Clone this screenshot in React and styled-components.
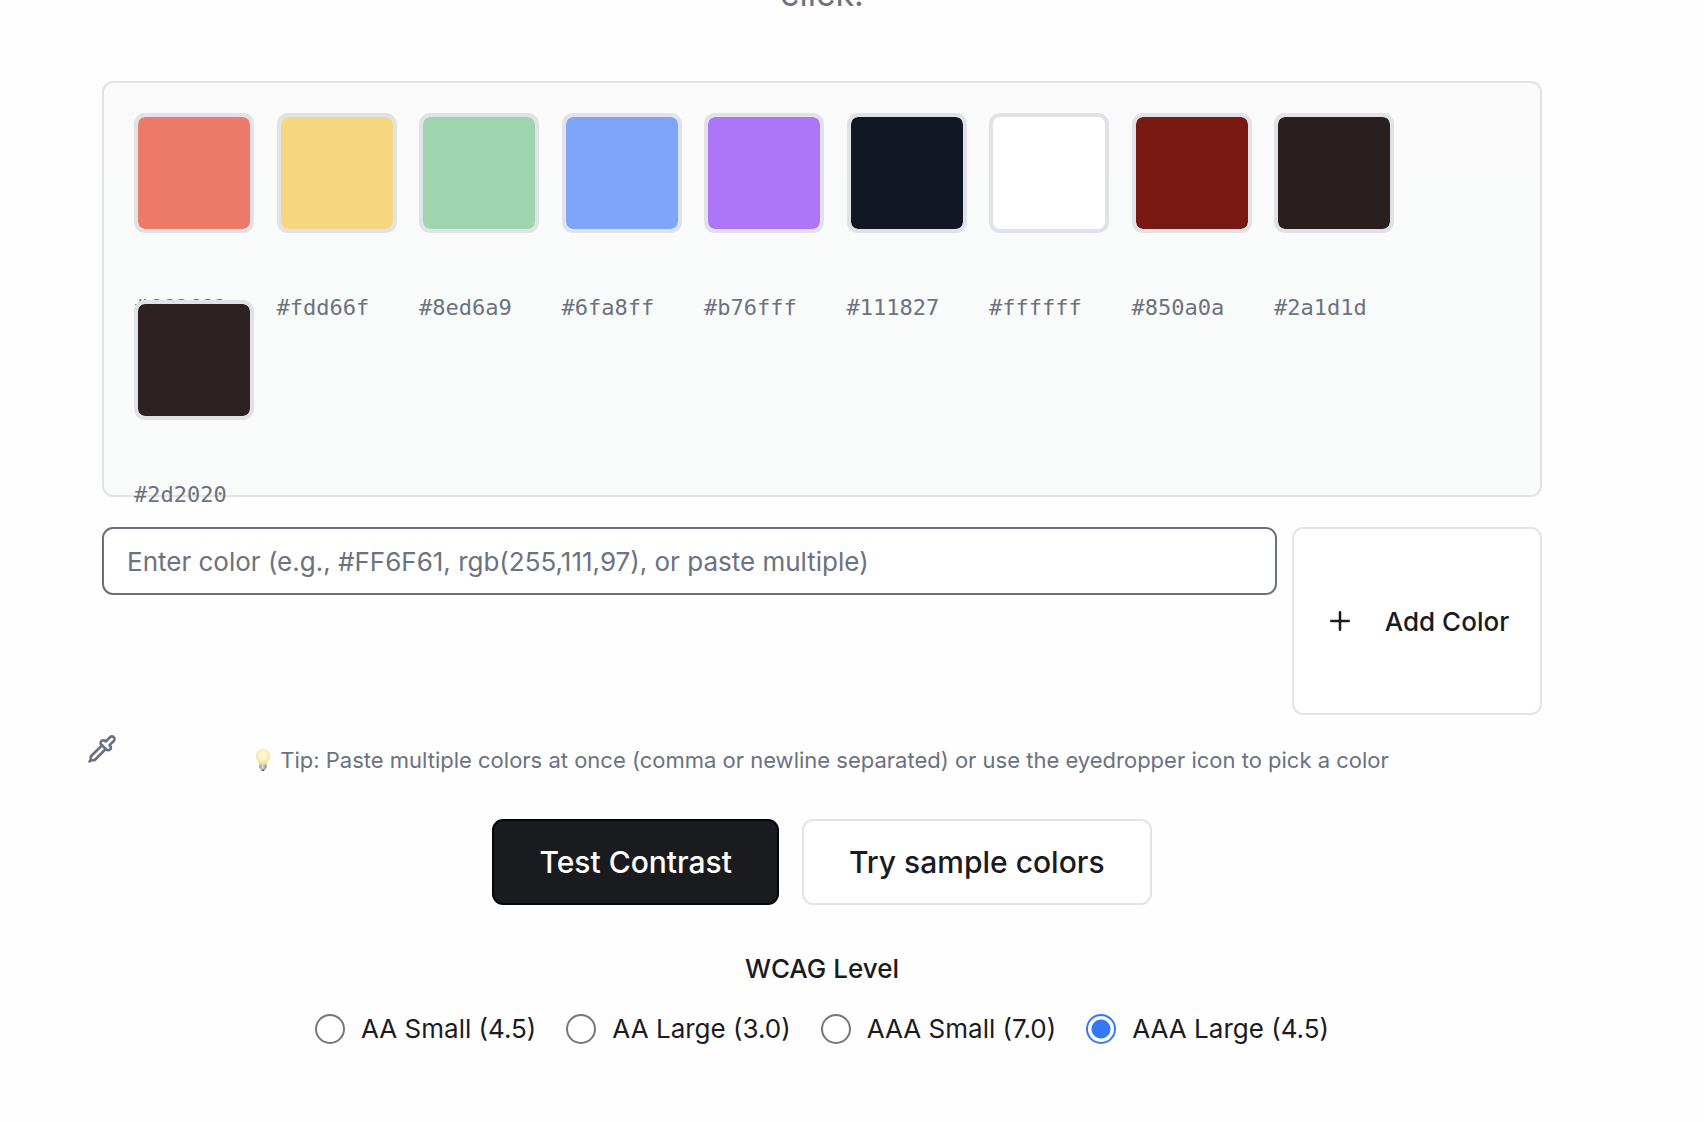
import React, { useState } from "react";
import styled, { createGlobalStyle } from "styled-components";

const GlobalStyle = createGlobalStyle`
  *, *::before, *::after { box-sizing: border-box; }
  body {
    margin: 0;
    background: #fefefe;
    color: #1a1b1e;
    font-family: Inter, "Liberation Sans", sans-serif;
  }
  button, input { font: inherit; color: inherit; }
`;

const Page = styled.main`
  display: flex;
  flex-direction: column;
  gap: 30px;
  padding: 0 162px 60px 102px;
`;

const Lead = styled.p`
  margin: -34px 0 29px;
  font-size: 34px;
  line-height: 56px;
  text-align: center;
  color: #6b7280;
`;

const Panel = styled.section`
  padding: 30px;
  border: 2px solid #e1e2e7;
  border-radius: 11px;
  background: linear-gradient(#fafafa 93px, #f9fbfa 93px);
`;

const SwatchGrid = styled.div`
  display: grid;
  grid-template-columns: repeat(9, 120px);
  justify-content: space-between;
  row-gap: 22px;
  max-width: 1260px;
`;

const SwatchItem = styled.div`
  display: flex;
  flex-direction: column;
  gap: 61px;
  height: 165px;
`;

const Swatch = styled.button`
  position: relative;
  flex: none;
  width: 120px;
  height: 120px;
  padding: 0;
  border: 4px solid #e1e2e7;
  border-radius: 11px;
  background: ${(p) => p.$color};
  background-clip: padding-box;
  cursor: pointer;
`;

const SwatchLabel = styled.span`
  font-family: "DejaVu Sans Mono", monospace;
  font-size: 22px;
  line-height: 28px;
  color: #6b7280;
`;

const EntryRow = styled.form`
  display: flex;
  align-items: flex-start;
  gap: 15px;
`;

const ColorInput = styled.input`
  flex: 1;
  min-width: 0;
  height: 68px;
  padding: 0 23px;
  border: 2px solid #6b7080;
  border-radius: 11px;
  outline: none;
  background: #ffffff;
  font-size: 26px;
  &::placeholder { color: #6b7280; opacity: 1; }
`;

const Button = styled.button`
  display: flex;
  align-items: center;
  justify-content: center;
  gap: 30px;
  min-width: 250px;
  height: ${(p) => (p.$tall ? "188px" : "86px")};
  padding: 0 ${(p) => (p.$tall ? "30px" : "45px")};
  border: 2px solid ${(p) => (p.$primary ? "#050607" : "#e3e4e7")};
  border-radius: 11px;
  background: ${(p) => (p.$primary ? "#1a1b1e" : "#ffffff")};
  color: ${(p) => (p.$primary ? "#ffffff" : "#1a1b1e")};
  font-size: ${(p) => (p.$tall ? "26px" : "30px")};
  font-weight: 500;
  white-space: nowrap;
  cursor: pointer;
`;

const TipRow = styled.div`
  display: flex;
  align-items: flex-start;
  margin: -11px 0 0 -15px;
`;

const PickerButton = styled.button`
  display: flex;
  flex: none;
  margin-right: -15px;
  padding: 0;
  border: 0;
  background: none;
  color: #6b7080;
  cursor: pointer;
`;

const Tip = styled.p`
  display: flex;
  flex: 1;
  align-items: center;
  justify-content: center;
  gap: 9px;
  margin: 10px 0 0;
  font-size: 22px;
  line-height: 32px;
  color: #6b7280;
`;

const Actions = styled.div`
  display: flex;
  justify-content: center;
  gap: 23px;
  margin-top: 13px;
`;

const Levels = styled.fieldset`
  margin: 0;
  padding: 18px 0 0;
  border: 0;
  min-width: 0;
`;

const LevelTitle = styled.legend`
  float: left;
  width: 100%;
  padding: 0;
  font-size: 26px;
  line-height: 32px;
  font-weight: 500;
  text-align: center;
`;

const LevelOptions = styled.div`
  display: flex;
  clear: both;
  justify-content: center;
  gap: 30px;
  padding-top: 28px;
`;

const Option = styled.label`
  display: flex;
  align-items: center;
  gap: 16px;
  font-size: 26px;
  line-height: 32px;
  cursor: pointer;
`;

const Radio = styled.input`
  appearance: none;
  width: 30px;
  height: 30px;
  margin: 0;
  border: 2px solid #767676;
  border-radius: 50%;
  background: #ffffff;
  &:checked {
    border-color: #3478f6;
    background: radial-gradient(circle, #3478f6 9px, #ffffff 10px);
  }
`;

const PlusIcon = () => (
  <svg width="30" height="30" viewBox="0 0 24 24" fill="none" stroke="currentColor"
    strokeWidth="2" strokeLinecap="round" strokeLinejoin="round" aria-hidden="true">
    <path d="M5 12h14M12 5v14" />
  </svg>
);

const PipetteIcon = () => (
  <svg width="30" height="30" viewBox="0 0 24 24" fill="none" stroke="currentColor"
    strokeWidth="2" strokeLinecap="round" strokeLinejoin="round" aria-hidden="true">
    <path d="m2 22 1-1h3l9-9" />
    <path d="M3 21v-3l9-9" />
    <path d="m15 6 3.4-3.4a2.1 2.1 0 1 1 3 3L18 9l.4.4a2.1 2.1 0 1 1-3 3l-3.8-3.8a2.1 2.1 0 1 1 3-3l.4.4Z" />
  </svg>
);

const BulbIcon = () => (
  <svg width="16" height="24" viewBox="0 0 16 24" aria-hidden="true">
    <defs>
      <radialGradient id="bulb" cx="50%" cy="42%" r="56%">
        <stop offset="0" stopColor="#fffdf0" />
        <stop offset=".55" stopColor="#fdf3c0" />
        <stop offset="1" stopColor="#efd98a" />
      </radialGradient>
      <linearGradient id="base">
        <stop offset="0" stopColor="#8c8c8c" />
        <stop offset=".45" stopColor="#dddddd" />
        <stop offset="1" stopColor="#858585" />
      </linearGradient>
    </defs>
    <path d="M8 1a7 7 0 0 1 7 7c0 3.4-2.7 5-3.3 8.6H4.3C3.7 13 1 11.4 1 8a7 7 0 0 1 7-7Z" fill="url(#bulb)" />
    <path d="M4.4 16.4h7.2v3.4L10 22H6l-1.6-2.2Z" fill="url(#base)" />
    <path d="M6.3 21.6h3.4L9 23H7Z" fill="#555555" />
  </svg>
);

const swatches = [
  ["#ff6f61", "#ed7968"],
  ["#fdd66f", "#f6d77f"],
  ["#8ed6a9", "#9ed5ae"],
  ["#6fa8ff", "#7da6f9"],
  ["#b76fff", "#ad75f7"],
  ["#111827", "#111723"],
  ["#ffffff", "#ffffff"],
  ["#850a0a", "#781a13"],
  ["#2a1d1d", "#281f1e"],
  ["#2d2020", "#2b2221"],
];

const levels = ["AA Small (4.5)", "AA Large (3.0)", "AAA Small (7.0)", "AAA Large (4.5)"];

export default function App() {
  const [level, setLevel] = useState(3);
  return (
    <>
      <GlobalStyle />
      <Page>
        <Lead>click.</Lead>
        <Panel>
          <SwatchGrid>
            {swatches.map(([name, color]) => (
              <SwatchItem key={name}>
                <Swatch type="button" $color={color} aria-label={name} />
                <SwatchLabel>{name}</SwatchLabel>
              </SwatchItem>
            ))}
          </SwatchGrid>
        </Panel>
        <EntryRow onSubmit={(e) => e.preventDefault()}>
          <ColorInput
            type="text"
            aria-label="Color"
            placeholder="Enter color (e.g., #FF6F61, rgb(255,111,97), or paste multiple)"
          />
          <Button type="submit" $tall>
            <PlusIcon />
            Add Color
          </Button>
        </EntryRow>
        <TipRow>
          <PickerButton type="button" aria-label="Pick a color">
            <PipetteIcon />
          </PickerButton>
          <Tip>
            <BulbIcon />
            Tip: Paste multiple colors at once (comma or newline separated) or use the eyedropper icon to pick a color
          </Tip>
        </TipRow>
        <Actions>
          <Button type="button" $primary>Test Contrast</Button>
          <Button type="button">Try sample colors</Button>
        </Actions>
        <Levels>
          <LevelTitle>WCAG Level</LevelTitle>
          <LevelOptions>
            {levels.map((label, i) => (
              <Option key={label}>
                <Radio type="radio" name="level" checked={level === i} onChange={() => setLevel(i)} />
                {label}
              </Option>
            ))}
          </LevelOptions>
        </Levels>
      </Page>
    </>
  );
}
